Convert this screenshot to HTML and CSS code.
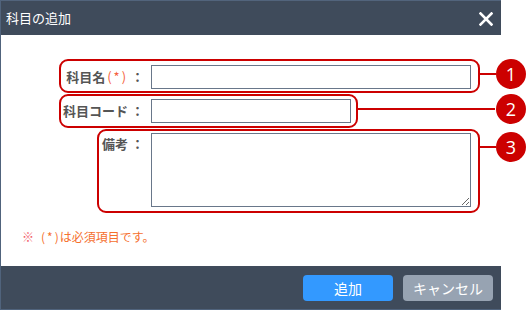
FILE: index.html
```html
<!DOCTYPE html>
<html lang="ja">
<head>
  <meta charset="UTF-8">
  <title>科目の追加</title>
  <link rel="stylesheet" href="styles.css">
</head>
<body>

<div class="screen">
  <div class="dialog">
    <div class="dialog-header">
      <span class="dialog-title">科目の追加</span>
      <svg class="close-icon" width="14" height="14" viewBox="0 0 14 14">
        <path d="M1.5 1.5 L12.5 12.5 M12.5 1.5 L1.5 12.5" stroke="#fff" stroke-width="2.6" stroke-linecap="square"/>
      </svg>
    </div>

    <div class="dialog-body">
      <div class="form-grid">
        <label class="field-label" for="subject-name">科目名<span class="req">(*)</span> ：</label>
        <input class="field-input wide" type="text" id="subject-name">

        <label class="field-label" for="subject-code">科目コード ：</label>
        <input class="field-input narrow" type="text" id="subject-code">

        <label class="field-label top" for="subject-note">備考 ：</label>
        <textarea class="field-input memo" id="subject-note"></textarea>
      </div>

      <p class="required-note"><span class="mark">※</span><span class="req-inline">(*)</span>は必須項目です。</p>
    </div>

    <div class="dialog-footer">
      <button class="btn btn-primary">追加</button>
      <button class="btn btn-cancel">キャンセル</button>
    </div>
  </div>

  <!-- callout annotations -->
  <div class="callout callout-1"><span class="callout-line"></span><span class="callout-num">1</span></div>
  <div class="callout callout-2"><span class="callout-line"></span><span class="callout-num">2</span></div>
  <div class="callout callout-3"><span class="callout-line"></span><span class="callout-num">3</span></div>
</div>

</body>
</html>
```

FILE: styles.css
```css
body {
  margin: 0;
  background: #fff;
  font-family: "Noto Sans CJK JP", "Noto Sans", sans-serif;
}

.screen {
  position: relative;
  width: 526px;
  height: 311px;
}

.dialog {
  width: 501px;
  box-sizing: border-box;
  border-left: 1px solid #50637c;
  border-bottom: 1px solid #50637c;
  background: #fff;
}

.dialog-header {
  height: 35px;
  box-sizing: border-box;
  border-top: 1px solid #52647c;
  background: #3f4b5b;
  display: flex;
  align-items: center;
  justify-content: space-between;
  padding: 0 8px 0 5px;
}

.dialog-title {
  color: #fff;
  font-size: 13px;
  line-height: 16px;
}

.close-icon {
  display: block;
  margin-top: 1px;
}

.dialog-body {
  padding: 30px 0 21px;
}

.form-grid {
  display: grid;
  grid-template-columns: 143px auto;
  column-gap: 7px;
  row-gap: 10px;
  justify-items: start;
  align-items: center;
}

.field-label {
  justify-self: end;
  color: #555;
  font-size: 13px;
  font-weight: bold;
  line-height: 16px;
  white-space: nowrap;
}

.field-label.top {
  align-self: start;
  margin-top: 3px;
}

.req {
  color: #f5623d;
  font-weight: normal;
  letter-spacing: 2px;
  padding-left: 2px;
}

.field-input {
  box-sizing: border-box;
  height: 24px;
  border: 1px solid #69778a;
  border-radius: 0;
  padding: 2px 4px;
  font-family: inherit;
  font-size: 13px;
  background: #fff;
  margin: 0;
}

.wide {
  width: 320px;
}

.narrow {
  width: 200px;
}

.memo {
  width: 320px;
  height: 74px;
  display: block;
  resize: both;
}

.required-note {
  margin: 22px 0 0 21px;
  font-size: 12px;
  line-height: 16px;
  color: #f5702e;
}

.required-note .mark {
  color: #f2606a;
  margin-right: 7px;
}

.req-inline {
  letter-spacing: 2px;
  margin-right: -1px;
}

.dialog-footer {
  height: 43px;
  box-sizing: border-box;
  background: #3f4b5b;
  display: flex;
  justify-content: flex-end;
  align-items: flex-start;
  gap: 10px;
  padding: 9px 8px 0 0;
}

.btn {
  width: 90px;
  height: 26px;
  border: none;
  border-radius: 4px;
  color: #fff;
  font-family: inherit;
  font-size: 14px;
  line-height: 16px;
  padding: 0;
  cursor: pointer;
}

.btn-primary {
  background: #3399ff;
}

.btn-cancel {
  background: #97a3b2;
}

/* red callout boxes drawn over the form */
.callout {
  position: absolute;
  box-sizing: border-box;
  border: 2px solid #cc0000;
  border-radius: 9px;
}

.callout-1 {
  left: 59px;
  top: 59px;
  width: 421px;
  height: 34px;
}

.callout-2 {
  left: 59px;
  top: 94px;
  width: 299px;
  height: 34px;
}

.callout-3 {
  left: 97px;
  top: 129px;
  width: 383px;
  height: 84px;
}

.callout-line {
  position: absolute;
  left: 100%;
  height: 2px;
  background: #cc0000;
}

.callout-1 .callout-line { top: 12px; width: 18px; }
.callout-2 .callout-line { top: 12px; width: 139px; }
.callout-3 .callout-line { top: 15px; width: 18px; }

.callout-num {
  position: absolute;
  width: 30px;
  height: 30px;
  border-radius: 50%;
  background: #cc0000;
  color: #fff;
  font-family: "Open Sans", "Liberation Sans", sans-serif;
  font-size: 18px;
  line-height: 30px;
  text-align: center;
}

.callout-1 .callout-num { left: 435px; top: -2px; }
.callout-2 .callout-num { left: 435px; top: -2px; }
.callout-3 .callout-num { left: 397px; top: 1px; }
```
